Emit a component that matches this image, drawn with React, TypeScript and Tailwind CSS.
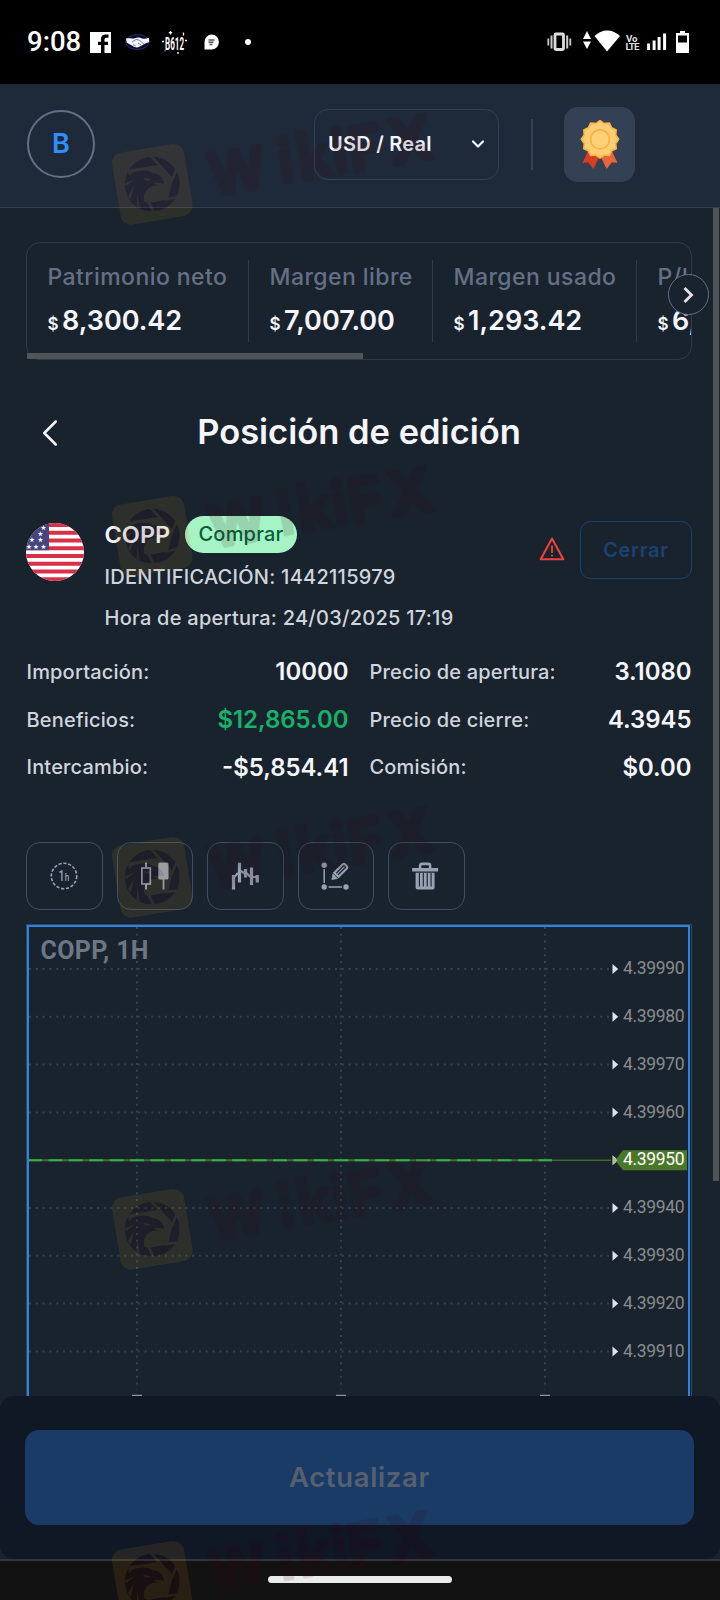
import { ChevronDown, ChevronLeft } from "lucide-react";
import type { ReactNode } from "react";

const stats = [
  { label: "Patrimonio neto", value: "8,300.42", width: "w-[222px]" },
  { label: "Margen libre", value: "7,007.00", width: "w-[184px]" },
  { label: "Margen usado", value: "1,293.42", width: "w-[204px]" },
  { label: "P/L", value: "6,572.59", width: "w-[200px]" },
];

const details = [
  { label: "Importación:", value: "10000", color: "text-[#f5f5fa]" },
  { label: "Precio de apertura:", value: "3.1080", color: "text-[#f5f5fa]" },
  { label: "Beneficios:", value: "$12,865.00", color: "text-[#17b26a]" },
  { label: "Precio de cierre:", value: "4.3945", color: "text-[#f5f5fa]" },
  { label: "Intercambio:", value: "-$5,854.41", color: "text-[#f5f5fa]" },
  { label: "Comisión:", value: "$0.00", color: "text-[#f5f5fa]" },
];

const prices = [
  "4.39990",
  "4.39980",
  "4.39970",
  "4.39960",
  "4.39950",
  "4.39940",
  "4.39930",
  "4.39920",
  "4.39910",
];
const PRICE_STEP = 47.8;
const CURRENT = 4;

function StatusBar() {
  return (
    <div className="h-[84px] shrink-0 bg-black flex items-center justify-between pl-[27px] pr-[31px] text-white">
      <div className="flex items-center h-[24px]">
        <span className="w-[63px] pb-px font-[Roboto] font-medium text-[27.5px] leading-6">
          9:08
        </span>
        <svg width="166" height="30" viewBox="90 26 166 30">
          <path d="M90 31h21v21h-6.500v-8h3.500v-3.300H104.500v-2c0-1.300.6-2 2-2h2v-3.200h-2.800c-3.300 0-4.700 1.800-4.700 4.700v2.500h-3v3.300h3v8H90z" fill="#fff" />
          <ellipse cx="137.300" cy="41" rx="11.700" ry="7.500" fill="#0a0b2a" stroke="#2b2c6e" strokeWidth="1" />
          <path d="M126 37.500c4-.5 6 .3 8 0 3-1.500 6-1.500 8 0 2 .5 4 .2 7-.5l.3 4-4 1.500-5.500 3c-2 1.500-5 1.200-7-.5l-6-3.200z" fill="#f4f5fb" />
          <path d="M132 41l4-2.500 3 .5 5 4M133 43.500l3 1.500M138 42l3 2" fill="none" stroke="#5d6190" strokeWidth=".8" />
          <text x="165" y="48.500" fill="#fff" fontFamily="Roboto" fontWeight="700" fontSize="18.500" textLength="19" lengthAdjust="spacingAndGlyphs">
            B612
          </text>
          <path d="M170.500 30v3.500M168.800 31.700h3.400M183.500 31.500v3M162 40.500h2M185 39.500h2M178 51v2M165 49.500v.8" stroke="#fff" strokeWidth="1.300" />
          <path d="M204.500 48.500v-7.500a7.200 7.500 0 1 1 7 7.500z" fill="#fff" />
          <path d="M208.500 39h6M208.500 41.300h5M209.500 43.500h3" stroke="#555" strokeWidth="1.400" />
          <circle cx="248" cy="41" r="3" fill="#fff" />
        </svg>
      </div>
      <svg width="142" height="30" viewBox="547 26 142 30">
        <rect x="555" y="33" width="8.500" height="15.500" rx="1" fill="none" stroke="#ddd" strokeWidth="2.800" />
        <path d="M551.500 34.500v13M567.200 34.500v13" stroke="#ccc" strokeWidth="2" />
        <path d="M548.300 37.500v7M570.300 37.500v7" stroke="#ccc" strokeWidth="1.800" />
        <path d="M587 30l4 8h-8zM587 48l-4-7.500h8z" fill="#fff" />
        <path d="M594.500 35c7-7.500 18.500-7.500 25.500 0L607 50.500z" fill="#fff" />
        <text fill="#ddd" fontFamily="Roboto" fontWeight="700" fontSize="9.800" letterSpacing="-.9">
          <tspan x="626" y="40.800">V</tspan>
          <tspan x="632">o</tspan>
          <tspan x="625.500" y="48.700">LTE</tspan>
        </text>
        <path d="M648.600 49v-6.500M654.100 49v-9.500M659.100 49v-13M664.600 49V32.500" stroke="#fff" strokeWidth="3" />
        <path d="M676 32h4v-2h5v2h4v20h-13zM678 34.500v7h9v-7z" fill="#fff" fillRule="evenodd" />
      </svg>
    </div>
  );
}

function Medal() {
  const points = Array.from({ length: 24 }, (_, i) => {
    const r = i % 2 ? 16.2 : 18.6;
    const a = (i * Math.PI) / 12;
    return `${(20 + r * Math.cos(a)).toFixed(1)},${(19.3 + r * Math.sin(a)).toFixed(1)}`;
  }).join(" ");
  return (
    <svg width="40" height="50" viewBox="0 0 40 50">
      <path d="M9 29L2.500 43l5.500-.8 5.500 6.800 7.500-16z" fill="#d83f22" />
      <path d="M31 29l6.500 14-5.500-.8-5.500 6.800L19 33z" fill="#e9653d" />
      <polygon points={points} fill="#ffce73" stroke="#fab84c" strokeWidth="1.800" strokeLinejoin="round" />
      <circle cx="20" cy="19.300" r="9.500" fill="#ffd078" stroke="#f6b044" strokeWidth="1.600" />
    </svg>
  );
}

function Header() {
  return (
    <header className="h-[124px] shrink-0 bg-[#1e2939] border-b border-[#344054] flex items-center pl-[27px]">
      <div className="w-[68px] h-[68px] mb-[3px] rounded-full border-2 border-[#667085] flex items-center justify-center text-[27px] font-semibold text-[#2e90fa]">
        B
      </div>
      <div className="w-[185px] h-[71px] ml-[219px] mb-[2px] rounded-[14px] border border-[#344054] flex items-center justify-between pl-[13px] pr-[10px] pb-px text-[20px] font-semibold tracking-[0.012em] text-[#f5f5fa]">
        USD / Real
        <ChevronDown className="w-5 h-5" strokeWidth={2.6} />
      </div>
      <div className="w-[2px] h-[51px] ml-[32px] mb-[2px] bg-[#344054]" />
      <div className="w-[71px] h-[75px] ml-[31px] mb-[2px] rounded-[14px] bg-[#344054] flex items-center justify-center">
        <Medal />
      </div>
    </header>
  );
}

function AccountStats() {
  return (
    <div className="relative ml-[26px] mr-[28px] mt-[34px] h-[118px]">
      <div className="h-full rounded-[14px] border border-[#2f3b48] overflow-hidden flex pt-[17px]">
        {stats.map((item) => (
          <div
            key={item.label}
            className={`${item.width} shrink-0 h-[82px] pl-[20.5px] border-r border-[#2f3b48]`}
          >
            <div className="mt-px h-[32px] leading-[32px] text-[23px] font-medium tracking-[0.019em] text-[#667085]">
              {item.label}
            </div>
            <div className="mt-[10px] flex items-baseline gap-[3.5px] leading-[36px] font-semibold text-[#f5f5fa]">
              <span className="text-[17px]">$</span>
              <span className="text-[27px]">{item.value}</span>
            </div>
          </div>
        ))}
      </div>
      <div className="absolute left-px bottom-px w-[336px] h-[6px] bg-[#4f5459]" />
      <button
        type="button"
        className="absolute -right-[17px] top-[32px] w-[41px] h-[41px] rounded-full border border-[#667085] bg-[#18232e] flex items-center justify-center"
      >
        <svg width="12" height="18" viewBox="0 0 12 18" fill="none" className="text-[#e0e2e8]">
          <path d="M1.500 2l7 7-7 7" stroke="currentColor" strokeWidth="2.800" />
        </svg>
      </button>
    </div>
  );
}

function Flag() {
  return (
    <svg width="58" height="58" viewBox="0 0 58 58">
      <clipPath id="flag">
        <circle cx="29" cy="29" r="29" />
      </clipPath>
      <g clipPath="url(#flag)">
        <rect width="58" height="58" fill="#fff" />
        {[0, 1, 2, 3, 4, 5, 6, 7].map((i) => (
          <rect key={i} y={i * 7.75} width="58" height="4" fill="#d9304a" />
        ))}
        <rect width="23" height="27.200" fill="#46467f" />
        <text fill="#fff" fontSize="6.500" fontFamily="DejaVu Sans">
          <tspan x="14.500" y="6.500">★</tspan>
          <tspan x="11.500" y="12.500">★</tspan>
          <tspan x="3 11.500" y="19">★★</tspan>
          <tspan x="0 7 14.500" y="25.800">★★★</tspan>
        </text>
      </g>
    </svg>
  );
}

function Position() {
  return (
    <section className="flex pl-[26px] pr-[28px] h-[126px]">
      <div className="pt-[7px]">
        <Flag />
      </div>
      <div className="ml-[20.500px] flex-1 font-medium text-[#d0d5dd] text-[20px] tracking-[0.013em]">
        <div className="flex items-center h-[37px]">
          <span className="w-[80.500px] text-[23.5px] font-semibold tracking-normal text-[#f5f5fa]">
            COPP
          </span>
          <span className="h-[37px] w-[112px] pb-[2px] rounded-full bg-[#a6f4c5] text-[#05603a] flex items-center justify-center tracking-[0.01em]">
            Comprar
          </span>
        </div>
        <div className="mt-[14px] leading-[20px]">
          IDENTIFICACIÓN: 1442115979
        </div>
        <div className="mt-[21px] leading-[20px]">
          Hora de apertura: 24/03/2025 17:19
        </div>
      </div>
      <svg width="26" height="24" viewBox="0 0 26 24" className="mt-[21px] mr-[15px] text-[#f04438]">
        <path d="M13 1.500L24.300 22.300H1.700z" fill="none" stroke="currentColor" strokeWidth="2" strokeLinejoin="round" />
        <path d="M13 8.500v7.500M13 17.800v1.700" stroke="currentColor" strokeWidth="1.800" />
      </svg>
      <button
        type="button"
        className="mt-[5px] w-[112px] h-[58px] rounded-[11px] border border-[#1c4270] text-[20px] font-semibold tracking-[0.03em] text-[#1c4270]"
      >
        Cerrar
      </button>
    </section>
  );
}

function ToolButton({ children }: { children: ReactNode }) {
  return (
    <button
      type="button"
      className="w-[76.300px] h-[68px] rounded-[14px] border border-[#414d60] text-[#98a2b3] flex items-center justify-center"
    >
      <svg width="28" height="28" viewBox="0 0 28 28" fill="none" stroke="currentColor" className="mr-px">
        {children}
      </svg>
    </button>
  );
}

function Toolbar() {
  return (
    <div className="flex gap-[14.200px] pl-[26.400px]">
      <ToolButton>
        <circle cx="14" cy="14" r="12.700" strokeWidth="1.600" strokeDasharray="3.200 1.700" />
        <text x="8.500" y="18.500" fill="currentColor" stroke="none" fontFamily="Roboto" fontWeight="500" fontSize="14.500" textLength="6" lengthAdjust="spacingAndGlyphs">
          1
        </text>
        <text x="14.800" y="18.500" fill="currentColor" stroke="none" fontFamily="Roboto" fontWeight="500" fontSize="10" textLength="4.500" lengthAdjust="spacingAndGlyphs">
          h
        </text>
      </ToolButton>
      <ToolButton>
        <path d="M5 .5v5M5 22v5.500" strokeWidth="2" />
        <rect x=".9" y="6" width="8.400" height="16" strokeWidth="1.700" />
        <path d="M22.500 17v10.500" strokeWidth="1.800" />
        <rect x="17.300" y=".5" width="10.200" height="17" rx="1.500" fill="currentColor" stroke="none" />
      </ToolButton>
      <ToolButton>
        <path d="M2.500 27.500V13M8.500 20.500V.8M14.500 15.500V7M20.500 23V5.500M26.200 20.500V13" strokeWidth="3.200" />
        <path d="M2 16.500l5-5.500M8 8l6 3.500M14 9.500l6 6M20 15h6" strokeWidth="2.200" />
      </ToolButton>
      <ToolButton>
        <circle cx="3.200" cy="3.300" r="2.700" fill="currentColor" stroke="none" />
        <circle cx="3.200" cy="25" r="2.700" fill="currentColor" stroke="none" />
        <circle cx="25" cy="25" r="2.700" fill="currentColor" stroke="none" />
        <path d="M3.200 7v14M7.500 25h13.500" strokeWidth="1.500" />
        <path d="M10.700 17.800l1.200-6 4.700 4.700z" fill="currentColor" strokeWidth=".5" />
        <path d="M13.300 10.800l8.500-8.500q1.200-1 2.600.4l1.200 1.200q1.300 1.400.2 2.600l-8.300 8.300z" strokeWidth="2.100" />
        <path d="M16 12.200l7.500-7.500" strokeWidth="1.200" />
      </ToolButton>
      <ToolButton>
        <g transform="translate(-.9 0)">
          <path d="M1 6h26v3.500H1z" fill="currentColor" stroke="none" />
          <path d="M9 6V3.500q0-1.600 1.600-1.600h6.800q1.600 0 1.600 1.600V6" strokeWidth="2.600" />
          <path d="M4.500 10.800h19V25.500q0 2-2 2h-15q-2 0-2-2z" fill="currentColor" stroke="none" />
          <path d="M8.300 11v13.500M12.200 11v13.500M16.100 11v13.500M20 11v13.500" stroke="#18232e" strokeWidth="1.100" />
        </g>
      </ToolButton>
    </div>
  );
}

function Chart() {
  return (
    <div className="ml-[26px] mr-[28px] mt-[14px] border border-b-0 border-[#3a4554] pr-px h-[472px]">
      <div className="border-2 border-b-0 border-[#2a85e8] h-full">
        {/* origin of the drawing is (29, 927) on the page */}
        <svg width="659" height="469" viewBox="29 927 659 469" fontFamily="Roboto" className="block">
          {[137, 341, 545].map((x) => (
            <g key={x}>
              <path d={`M${x} 927V1390`} stroke="#36424d" strokeWidth="2" strokeDasharray="2 4.800" />
              <path d={`M${x - 5} 1395.500h10`} stroke="#8d95a3" strokeWidth="1.500" />
            </g>
          ))}
          {prices.map((price, i) => {
            const y = 969 + i * PRICE_STEP;
            return (
              <g key={price}>
                {i !== CURRENT && (
                  <path d={`M29 ${y}H611`} stroke="#34404b" strokeWidth="2" strokeDasharray="2 4.800" />
                )}
                <path d={`M612.500 ${y - 5}l5.700 5-5.700 5z`} fill="#dfe2ee" />
                {i === CURRENT && (
                  <>
                    <path d={`M29 ${y}H552`} stroke="#4a6a25" strokeWidth="2" />
                    <path d={`M552 ${y}H611`} stroke="#456b28" strokeWidth="1.500" />
                    <path d={`M29 ${y}H552`} stroke="#31b34a" strokeWidth="2" strokeDasharray="14 6.420" strokeDashoffset="1" />
                    <path d={`M615 ${y}l8-10h64v20h-64z`} fill="#4a7829" />
                    <path d={`M613 ${y - 4}l4.500 4-4.500 4z`} fill="#a9c48f" />
                  </>
                )}
                <text x="623" y={y + 5.2} fontSize="17.500" fill={i === CURRENT ? "#fff" : "#8a8b8c"} textLength="61.500">
                  {price}
                </text>
              </g>
            );
          })}
          <text x="40.500" y="958.700" fontSize="25" fontWeight="700" fill="#6c7884" textLength="108">
            COPP, 1H
          </text>
        </svg>
      </div>
    </div>
  );
}

function Watermark({ y }: { y: number }) {
  return (
    <g transform={`translate(0 ${y + 55}) scale(0.33333)`} opacity=".135">
      <rect x="347.500" y="278.500" width="219" height="219" rx="32" fill="#b9821e" transform="rotate(-9.400 457 388)" />
      <circle cx="457" cy="387" r="82" fill="#400410" />
      <path d="M475 333L385 347L395 440L447 441L502 430L515 372z" fill="#b9821e" />
      <path d="M453 303L517 373L530 343M515 370L500 432L535 426M504 429L445 440L462 472M380 348L475 334" fill="none" stroke="#b9821e" strokeWidth="8" />
      <path d="M374 392c4-24 20-44 48-45 16-1 28 1 34 6 20 2 36 16 36 33-10-3-22-4-32-2l18 8c-28-4-46 14-46 34 0 16 5 30 14 42-30-2-54-22-64-46z" fill="#400410" />
      <path d="M430 369l22 3c-6 7-18 6-22-3zM376 384l28-10-28 20zM384 424l18-32-10 42zM410 454l2-34 8 42z" fill="#b9821e" />
      <text
        transform="translate(620 422) rotate(-9.600)"
        fontFamily="Inter"
        fontWeight="500"
        fontSize="176"
        fill="#400410"
        stroke="#400410"
        strokeWidth="16"
        strokeLinejoin="round"
      >
        <tspan x="20" y="2" fontSize="165">W</tspan>
        <tspan x="227" y="0" fontFamily="Lato" fontWeight="700" fontSize="186" strokeWidth="9">i</tspan>
        <tspan x="286" fontFamily="Lato" fontWeight="700" fontSize="190" strokeWidth="10">k</tspan>
        <tspan x="391" fontFamily="Lato" fontWeight="700" fontSize="186" strokeWidth="9">i</tspan>
        <tspan x="441">F</tspan>
        <tspan x="569">X</tspan>
      </text>
    </g>
  );
}

export default function App() {
  return (
    <div className="relative w-[720px] h-[1600px] overflow-hidden flex flex-col bg-[#18232e] font-[Inter,sans-serif]">
      <StatusBar />
      <Header />
      <main className="flex-1 min-h-0 overflow-hidden">
        <AccountStats />
        <div className="mt-[46px] h-[52px] flex items-center justify-center relative pr-[2px]">
          <ChevronLeft className="absolute left-[27px] top-[4px] w-[46px] h-[46px] text-[#f5f5fa]" strokeWidth={1.3} />
          <h1 className="text-[34.5px] font-semibold text-[#f5f5fa]">
            Posición de edición
          </h1>
        </div>
        <div className="h-[58px]" />
        <Position />
        <div className="grid grid-cols-[322px_322px] gap-x-[21px] pl-[26.500px] mt-[6px]">
          {details.map((item) => (
            <div key={item.label} className="h-[47.800px] flex items-center justify-between">
              <span className="text-[20px] font-medium tracking-[0.009em] text-[#d0d5dd]">
                {item.label}
              </span>
              <span className={`text-[23.9px] font-semibold ${item.color}`}>
                {item.value}
              </span>
            </div>
          ))}
        </div>
        <div className="mt-[50.600px]">
          <Toolbar />
        </div>
        <Chart />
      </main>
      <footer className="h-[163px] shrink-0 rounded-[14px] bg-[#101725] px-[25px] pt-[34px]">
        <button
          type="button"
          className="w-[669px] h-[95px] pt-px rounded-[14px] bg-[#193b65] text-[27.5px] font-semibold tracking-[0.024em] text-[#566070]"
        >
          Actualizar
        </button>
      </footer>
      <div className="h-[41px] shrink-0 bg-[#121212] border-t-2 border-[#373737] flex justify-center pt-[15px]">
        <div className="w-[184px] h-[7px] rounded-full bg-[#ebebeb]" />
      </div>
      {/* page scrollbar */}
      <div className="absolute left-[713px] top-[208px] w-[6px] h-[973px] bg-[#4f5459]" />
      <svg className="absolute inset-0 pointer-events-none" width="720" height="1600" viewBox="0 0 720 1600">
        {[0, 352, 693, 1045, 1397].map((y) => (
          <Watermark key={y} y={y} />
        ))}
      </svg>
    </div>
  );
}
